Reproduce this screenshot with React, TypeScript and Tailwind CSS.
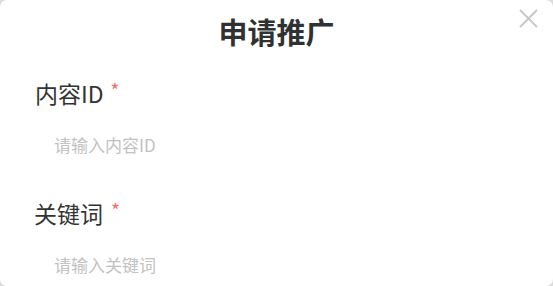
export default function App() {
  return (
    <div className="w-[553px] h-[286px] bg-[#dcdcdc] font-['Noto_Sans_CJK_SC','Noto_Sans',sans-serif]">
      <div className="relative w-full h-full bg-white rounded-[7px] overflow-hidden">
        <button className="absolute left-[519px] top-[9px]">
          <svg width="19" height="19" viewBox="0 0 19 19" fill="none" stroke="#c6c6c6" strokeWidth="1.8">
            <path d="M1 1L18 18M18 1L1 18" />
          </svg>
        </button>
        <h2 className="pt-[11px] text-center text-[29px] leading-[40px] font-bold text-[#303133]">申请推广</h2>

        <div className="pl-[35px] mt-[30px]">
          <label className="flex items-start text-[23px] leading-[24px] text-[#333]">
            内容ID
            <span className="ml-[7px] mt-[-1px] text-[19px] leading-[19px] text-[#f56c6c]">*</span>
          </label>
          <input
            className="mt-[30px] ml-[19px] block w-[460px] text-[17px] leading-[20px] outline-none placeholder:text-[#c2c2c2]"
            placeholder="请输入内容ID"
          />
        </div>

        <div className="pl-[34px] mt-[46px]">
          <label className="flex items-start text-[23px] leading-[24px] text-[#333]">
            关键词
            <span className="ml-[8px] mt-[-1px] text-[19px] leading-[19px] text-[#f56c6c]">*</span>
          </label>
          <input
            className="mt-[30px] ml-[20px] block w-[460px] text-[17px] leading-[20px] outline-none placeholder:text-[#c2c2c2]"
            placeholder="请输入关键词"
          />
        </div>
      </div>
    </div>
  );
}
